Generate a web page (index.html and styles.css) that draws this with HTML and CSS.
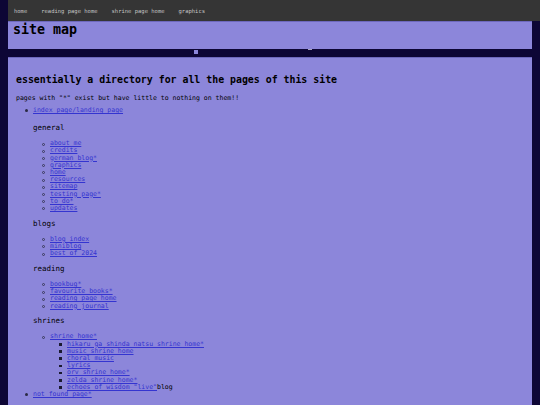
FILE: index.html
```html
<!DOCTYPE html>
<html>
<head>
<meta charset="utf-8">
<title>site map</title>
<link rel="stylesheet" href="styles.css">
</head>
<body>
<nav class="topnav">
  <a href="#">home</a>
  <a href="#">reading page home</a>
  <a href="#">shrine page home</a>
  <a href="#">graphics</a>
</nav>
<header class="banner">
  <h1 class="title">site map</h1>
</header>
<div class="gap"><span class="dot-a"></span><span class="dot-b"></span></div>
<main class="content">
  <h2 class="lead">essentially a directory for all the pages of this site</h2>
  <p class="note">pages with "*" exist but have little to nothing on them!!</p>
  <ul class="lvl1">
    <li><a href="#">index page/landing page</a>
      <h3 class="section">general</h3>
      <ul class="lvl2">
        <li><a href="#">about me</a></li>
        <li><a href="#">credits</a></li>
        <li><a href="#">german blog*</a></li>
        <li><a href="#">graphics</a></li>
        <li><a href="#">home</a></li>
        <li><a href="#">resources</a></li>
        <li><a href="#">sitemap</a></li>
        <li><a href="#">testing page*</a></li>
        <li><a href="#">to do*</a></li>
        <li><a href="#">updates</a></li>
      </ul>
      <h3 class="section">blogs</h3>
      <ul class="lvl2">
        <li><a href="#">blog index</a></li>
        <li><a href="#">miniblog</a></li>
        <li><a href="#">best of 2024</a></li>
      </ul>
      <h3 class="section">reading</h3>
      <ul class="lvl2">
        <li><a href="#">bookbug*</a></li>
        <li><a href="#">favourite books*</a></li>
        <li><a href="#">reading page home</a></li>
        <li><a href="#">reading journal</a></li>
      </ul>
      <h3 class="section">shrines</h3>
      <ul class="lvl2">
        <li><a href="#">shrine home*</a>
          <ul class="lvl3">
            <li><a href="#">hikaru ga shinda natsu shrine home*</a></li>
            <li><a href="#">music shrine home</a></li>
            <li><a href="#">choral music</a></li>
            <li><a href="#">lyrics</a></li>
            <li><a href="#">orv shrine home*</a></li>
            <li><a href="#">zelda shrine home*</a></li>
            <li><a href="#">echoes of wisdom "live"</a>blog</li>
          </ul>
        </li>
      </ul>
    </li>
    <li><a href="#">not found page*</a></li>
  </ul>
</main>
</body>
</html>
```

FILE: styles.css
```css
html, body {
  margin: 0;
  padding: 0;
}
body {
  background: #0d0635;
  font-family: "DejaVu Sans Mono", "Liberation Mono", monospace;
  color: #000;
  overflow: hidden;
}
.topnav {
  margin-left: 8px;
  height: 21px;
  background: #353535;
  display: flex;
  align-items: center;
  gap: 14px;
  padding-left: 6px;
  box-sizing: border-box;
}
.topnav a {
  color: #c4c4c4;
  text-decoration: none;
  font-size: 5.5px;
  line-height: 8px;
}
.banner {
  margin: 0 8px;
  height: 28px;
  background: #8c86da;
  border-top: 1px solid #6e68bd;
  box-sizing: border-box;
  padding: 1px 5px 0;
}
.title {
  margin: 0;
  font-size: 13.3px;
  line-height: 13px;
  font-weight: bold;
}
.gap {
  height: 8px;
  display: flex;
  align-items: flex-start;
}
.dot-a {
  margin-left: 194px;
  margin-top: 1px;
  width: 4px;
  height: 4px;
  background: #8c86da;
}
.dot-b {
  margin-left: 110px;
  width: 4px;
  height: 1px;
  background: #a7a4c0;
}
.content {
  margin: 0 8px;
  background: #8c86da;
  border-top: 1px solid #6e68bd;
  padding: 16px 8px 20px;
  min-height: 400px;
}
.lead {
  margin: 0;
  font-size: 9.9px;
  line-height: 12px;
  font-weight: bold;
}
.note {
  margin: 8px 0 0;
  font-size: 6.5px;
  line-height: 8px;
  font-weight: normal;
}
ul {
  margin: 0;
  list-style: none;
}
li {
  line-height: 7.2px;
}
li::before {
  content: "";
  float: left;
  box-sizing: border-box;
  width: 3px;
  height: 3px;
  margin-left: -8px;
  margin-top: 2.4px;
  background: #2a2a44;
}
.lvl1 {
  margin-top: 5px;
  padding-left: 17px;
  font-size: 6.5px;
}
.lvl1 > li::before {
  border-radius: 50%;
}
.lvl2 {
  padding-left: 17px;
}
.lvl2 > li::before {
  border-radius: 50%;
  background: transparent;
  border: 1px solid #3a3a5a;
}
.lvl3 {
  padding-left: 17px;
}
.lvl3 > li::before {
  width: 2.5px;
  height: 2.5px;
  background: #1a1a30;
  border: none;
  border-radius: 0;
}
a {
  color: #3434d0;
  text-decoration: underline;
}
.section {
  margin: 9px 0 8px;
  font-size: 7.5px;
  line-height: 9px;
  font-weight: normal;
}
.lvl2 + .section {
  margin-top: 6.6px;
}
```
